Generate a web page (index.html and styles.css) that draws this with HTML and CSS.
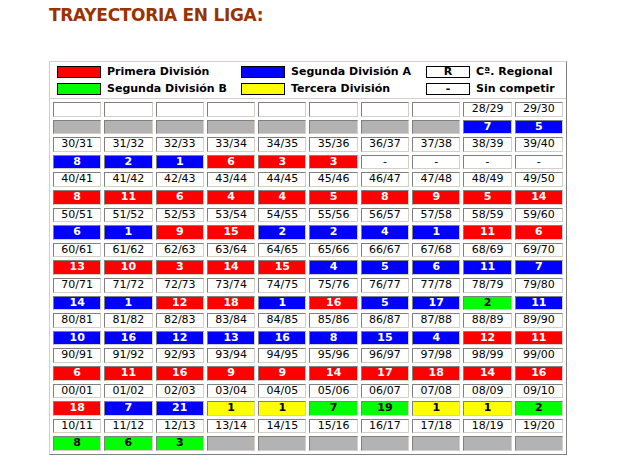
FILE: index.html
```html
<!DOCTYPE html>
<html lang="es">
<head>
<meta charset="utf-8">
<title>Trayectoria en liga</title>
<link rel="stylesheet" href="styles.css">
</head>
<body>
<div class="page">
  <h1 class="title">TRAYECTORIA EN LIGA:</h1>
  <div class="board">
    <div class="legend">
      <span class="key red"></span><span class="label">Primera División</span>
      <span class="key blue"></span><span class="label">Segunda División A</span>
      <span class="key white">R</span><span class="label">Cª. Regional</span>
      <span class="key green"></span><span class="label">Segunda División B</span>
      <span class="key yellow"></span><span class="label">Tercera División</span>
      <span class="key white">-</span><span class="label">Sin competir</span>
    </div>
    <div class="grid" id="grid"></div>
  </div>
</div>
<script src="app.js"></script>
</body>
</html>
```

FILE: styles.css
```css
html, body {
  margin: 0;
  padding: 0;
  background: #ffffff;
}
.page {
  padding: 5px 0 0 49px;
  font-family: "DejaVu Sans", Verdana, sans-serif;
}
.title {
  margin: 0;
  font-size: 17px;
  line-height: 20px;
  letter-spacing: -0.3px;
  font-weight: bold;
  color: #993300;
}
.board {
  margin-top: 36px;
  width: 518px;
  box-sizing: border-box;
  border: 1px solid;
  border-color: #d4d0c8 #808080 #808080 #d4d0c8;
}
.legend {
  display: grid;
  grid-template-columns: 44px 140px 44px 141px 44px 1fr;
  grid-auto-rows: 17px;
  padding: 1px 7px 1px 7px;
  border-bottom: 1px solid #d4d0c8;
  align-items: center;
}
.key {
  box-sizing: border-box;
  height: 12px;
  border: 1px solid #000;
  font-size: 11px;
  line-height: 10px;
  font-weight: bold;
  text-align: center;
  color: #000;
}
.label {
  padding-left: 6px;
  font-size: 11px;
  font-weight: bold;
  color: #000;
  white-space: nowrap;
}
.grid {
  display: grid;
  grid-template-columns: repeat(10, 1fr);
  grid-auto-rows: 14.6px;
  gap: 3px;
  padding: 3px;
}
.cell {
  box-sizing: border-box;
  border: 1px solid;
  border-color: #808080 #d4d0c8 #d4d0c8 #808080;
  background: #ffffff;
  font-size: 11px;
  line-height: 12.6px;
  text-align: center;
  color: #000;
}
.cell.num { font-weight: bold; }
.red, .cell.red { background: #ff0000; color: #ffffff; }
.blue, .cell.blue { background: #0000ff; color: #ffffff; }
.green, .cell.green { background: #00ff00; color: #000; }
.yellow, .cell.yellow { background: #ffff00; color: #000; }
.white, .cell.white { background: #ffffff; color: #000; }
.gray, .cell.gray { background: #b3b3b3; }
```

FILE: app.js
```js
(function () {
  var grid = document.getElementById('grid');
  var rows = [
    ['', '', '', '', '', '', '', '', '28/29', '29/30'],
    ['g', 'g', 'g', 'g', 'g', 'g', 'g', 'g', 'b7', 'b5'],
    'y30',
    ['b8', 'b2', 'b1', 'r6', 'r3', 'r3', 'w-', 'w-', 'w-', 'w-'],
    'y40',
    ['r8', 'r11', 'r6', 'r4', 'r4', 'r5', 'r8', 'r9', 'r5', 'r14'],
    'y50',
    ['b6', 'b1', 'r9', 'r15', 'b2', 'b2', 'b4', 'b1', 'r11', 'r6'],
    'y60',
    ['r13', 'r10', 'r3', 'r14', 'r15', 'b4', 'b5', 'b6', 'b11', 'b7'],
    'y70',
    ['b14', 'b1', 'r12', 'r18', 'b1', 'r16', 'b5', 'b17', 'v2', 'b11'],
    'y80',
    ['b10', 'b16', 'b12', 'b13', 'b16', 'b8', 'b15', 'b4', 'r12', 'r11'],
    'y90',
    ['r6', 'r11', 'r16', 'r9', 'r9', 'r14', 'r17', 'r18', 'r14', 'r16'],
    'y0',
    ['r18', 'b7', 'b21', 'a1', 'a1', 'v7', 'v19', 'a1', 'a1', 'v2'],
    'y10',
    ['v8', 'v6', 'v3', 'g', 'g', 'g', 'g', 'g', 'g', 'g']
  ];
  var cls = { r: 'red', b: 'blue', v: 'green', a: 'yellow', g: 'gray', w: 'white' };
  function two(n) { n = n % 100; return (n < 10 ? '0' : '') + n; }
  function add(className, text) {
    var d = document.createElement('div');
    d.className = className;
    d.textContent = text;
    grid.appendChild(d);
  }
  rows.forEach(function (row) {
    if (typeof row === 'string') {
      var start = parseInt(row.slice(1), 10);
      for (var i = 0; i < 10; i++) {
        add('cell', two(start + i) + '/' + two(start + i + 1));
      }
      return;
    }
    row.forEach(function (t) {
      if (t.indexOf('/') >= 0 || t === '') {
        add('cell', t);
      } else if (t[0] === 'w') {
        add('cell', t.slice(1));
      } else {
        add('cell num ' + cls[t[0]], t.slice(1));
      }
    });
  });
})();
```
